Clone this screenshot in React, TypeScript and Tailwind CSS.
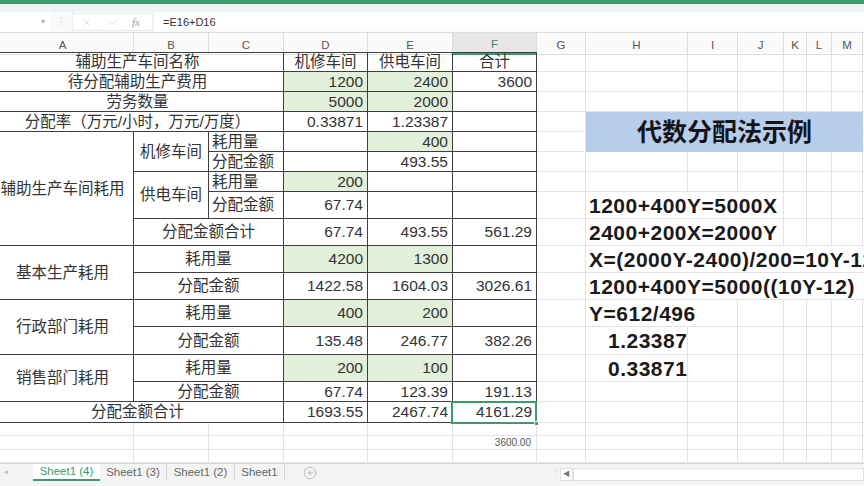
import React from "react";
import { X, Check, CirclePlus } from "lucide-react";

const FONT = "font-['Liberation_Sans','Noto_Sans_CJK_SC',sans-serif]";
const DK = "border-r border-b border-[#3f3f3f] flex items-center text-[15.5px] leading-none text-[#333] whitespace-nowrap";
const LT = "border-r border-b border-[#e3e3e3]";
const GR = "bg-[#e2efda]";
const RT = "border-b border-[#e3e3e3] flex items-center pl-[3px] text-[21px] font-bold tracking-[0.5px] text-[#1a1a1a] whitespace-nowrap leading-none";

function Lights({ n }: { n: number }) {
  return (
    <>
      {Array.from({ length: n }).map((_, i) => (
        <div key={i} className={LT} />
      ))}
    </>
  );
}

function Ctr({ className = "", children }: { className?: string; children?: React.ReactNode }) {
  return <div className={`${DK} justify-center ${className}`}>{children}</div>;
}

function Lft({ className = "", children }: { className?: string; children?: React.ReactNode }) {
  return <div className={`${DK} justify-start pl-[3px] ${className}`}>{children}</div>;
}

function Num({ v, g, className = "" }: { v?: string; g?: boolean; className?: string }) {
  return <div className={`${DK} justify-end pr-[4px] ${g ? GR : ""} ${className}`}>{v}</div>;
}

function FormulaBar() {
  return (
    <div className="h-[20px] flex items-center bg-[#f8f9fa]">
      <div className="w-[50px] h-full bg-white flex items-center justify-end pr-[5px] text-[8px] text-[#aaa]">▾</div>
      <div className="w-[22px] h-full flex items-center justify-center text-[11px] text-[#d0d0d0]">⋮</div>
      <div className="w-[81px] h-[18px] bg-white border border-[#ececec] flex items-center">
        <X size={11} strokeWidth={1.5} className="ml-[8px] text-[#cfcfcf]" />
        <Check size={11} strokeWidth={1.5} className="ml-[16px] text-[#cfcfcf]" />
        <span className="ml-[13px] text-[11px] italic text-[#9a9a9a] font-['Liberation_Serif',serif]">fx</span>
      </div>
      <div className="flex-1 h-[18px] ml-[2px] bg-white flex items-center pl-[8px] text-[11px] text-[#333]">=E16+D16</div>
    </div>
  );
}

const COLS = "grid grid-cols-[142px_75px_75px_84px_85px_84px_49px_102px_50px_46px_23px_25px_31px_40px] ml-[-8px]";

function HeaderRow() {
  const names = ["A", "B", "C", "D", "E", "F", "G", "H", "I", "J", "K", "L", "M", ""];
  return (
    <div className={`${COLS} h-[19px] bg-[#fafafa]`}>
      {names.map((n, i) =>
        n === "F" ? (
          <div key={i} className="border-r border-[#dcdcdc] border-b-2 border-b-[#3a9b6c] bg-[#e6e6e6] flex items-center justify-center text-[11.5px] text-[#3a8a62] pt-[3px]">
            {n}
          </div>
        ) : (
          <div key={i} className="border-r border-b border-[#dcdcdc] flex items-center justify-center text-[11.5px] text-[#555] pt-[3px]">
            {n}
          </div>
        )
      )}
    </div>
  );
}

function Body() {
  return (
    <div className={`${COLS} grid-rows-[20px_20px_20px_20px_20px_20px_20px_27px_27px_27px_27px_27px_28px_27px_20px_21px_13px_14px_13px]`}>
      {/* row 1 */}
      <Ctr className="col-span-3 border-t">辅助生产车间名称</Ctr>
      <Ctr className="border-t">机修车间</Ctr>
      <Ctr className="border-t">供电车间</Ctr>
      <Ctr className="border-t">合计</Ctr>
      <Lights n={8} />
      {/* row 2 */}
      <Ctr className="col-span-3">待分配辅助生产费用</Ctr>
      <Num v="1200" g />
      <Num v="2400" g />
      <Num v="3600" />
      <Lights n={8} />
      {/* row 3 */}
      <Ctr className="col-span-3">劳务数量</Ctr>
      <Num v="5000" g />
      <Num v="2000" g />
      <Num />
      <Lights n={8} />
      {/* row 4 */}
      <Ctr className="col-span-3">分配率（万元/小时，万元/万度）</Ctr>
      <Num v="0.33871" />
      <Num v="1.23387" />
      <Num />
      <div className={LT} />
      <div className="col-span-6 row-span-2 bg-[#b6cdec] flex items-center justify-center text-[25px] font-bold text-[#141414] leading-none">
        代数分配法示例
      </div>
      <div className={LT} />
      {/* row 5 */}
      <Ctr className="row-span-5">辅助生产车间耗用</Ctr>
      <Ctr className="row-span-2">机修车间</Ctr>
      <Lft>耗用量</Lft>
      <Num />
      <Num v="400" g />
      <Num />
      <div className={LT} />
      <div className={LT} />
      {/* row 6 */}
      <Lft>分配金额</Lft>
      <Num />
      <Num v="493.55" />
      <Num />
      <Lights n={8} />
      {/* row 7 */}
      <Ctr className="row-span-2">供电车间</Ctr>
      <Lft>耗用量</Lft>
      <Num v="200" g />
      <Num />
      <Num />
      <Lights n={8} />
      {/* row 8 */}
      <Lft>分配金额</Lft>
      <Num v="67.74" />
      <Num />
      <Num />
      <div className={LT} />
      <div className={`${RT} col-span-3 border-r`}>1200+400Y=5000X</div>
      <Lights n={4} />
      {/* row 9 */}
      <Ctr className="col-span-2">分配金额合计</Ctr>
      <Num v="67.74" />
      <Num v="493.55" />
      <Num v="561.29" />
      <div className={LT} />
      <div className={`${RT} col-span-3 border-r`}>2400+200X=2000Y</div>
      <Lights n={4} />
      {/* row 10 */}
      <Ctr className="row-span-2">基本生产耗用</Ctr>
      <Ctr className="col-span-2">耗用量</Ctr>
      <Num v="4200" g />
      <Num v="1300" g />
      <Num />
      <div className={LT} />
      <div className={`${RT} col-span-7`}>X=(2000Y-2400)/200=10Y-12</div>
      {/* row 11 */}
      <Ctr className="col-span-2">分配金额</Ctr>
      <Num v="1422.58" />
      <Num v="1604.03" />
      <Num v="3026.61" />
      <div className={LT} />
      <div className={`${RT} col-span-7`}>1200+400Y=5000((10Y-12)</div>
      {/* row 12 */}
      <Ctr className="row-span-2">行政部门耗用</Ctr>
      <Ctr className="col-span-2">耗用量</Ctr>
      <Num v="400" g />
      <Num v="200" g />
      <Num />
      <div className={LT} />
      <div className={`${RT} col-span-2 border-r`}>Y=612/496</div>
      <Lights n={5} />
      {/* row 13 */}
      <Ctr className="col-span-2">分配金额</Ctr>
      <Num v="135.48" />
      <Num v="246.77" />
      <Num v="382.26" />
      <div className={LT} />
      <div className={`${RT} border-r pl-[22px]`}>1.23387</div>
      <Lights n={6} />
      {/* row 14 */}
      <Ctr className="row-span-2">销售部门耗用</Ctr>
      <Ctr className="col-span-2">耗用量</Ctr>
      <Num v="200" g />
      <Num v="100" g />
      <Num />
      <div className={LT} />
      <div className={`${RT} border-r pl-[22px]`}>0.33871</div>
      <Lights n={6} />
      {/* row 15 */}
      <Ctr className="col-span-2">分配金额</Ctr>
      <Num v="67.74" />
      <Num v="123.39" />
      <Num v="191.13" />
      <Lights n={8} />
      {/* row 16 */}
      <Ctr className="col-span-3">分配金额合计</Ctr>
      <Num v="1693.55" />
      <Num v="2467.74" />
      <Num v="4161.29" />
      <Lights n={8} />
      {/* row 17 */}
      <Lights n={14} />
      {/* row 18 */}
      <Lights n={5} />
      <div className={`${LT} flex items-center justify-end pr-[5px] text-[10px] leading-none text-[#555]`}>3600.00</div>
      <Lights n={8} />
      {/* row 19 */}
      <Lights n={14} />
    </div>
  );
}

function Selection() {
  return (
    <div className="absolute left-[451px] top-[401px] w-[86px] h-[23px] border-2 border-[#3a9b6c] pointer-events-none">
      <div className="absolute right-[-4px] bottom-[-4px] w-[5px] h-[5px] bg-[#3a9b6c] border border-white" />
    </div>
  );
}

function TabBar() {
  return (
    <div className="h-[23px] border-t border-[#d6d6d6] bg-[#f4f4f4] flex items-start text-[11.5px] text-[#666]">
      <div className="w-[33px] h-[17px] flex items-center pl-[4px] text-[7px] text-[#bbb]">◂</div>
      <div className="w-[67px] h-[17px] bg-white border-b-2 border-[#3a9b6c] flex items-center justify-center text-[#3a9b6c]">Sheet1 (4)</div>
      <div className="w-[67px] h-[17px] border-r border-[#d8d8d8] flex items-center justify-center">Sheet1 (3)</div>
      <div className="w-[68px] h-[17px] border-r border-[#d8d8d8] flex items-center justify-center">Sheet1 (2)</div>
      <div className="w-[50px] h-[17px] border-r border-[#d8d8d8] flex items-center justify-center">Sheet1</div>
      <div className="ml-[18px] h-[17px] flex items-center">
        <CirclePlus size={14} strokeWidth={1.2} className="text-[#aaa]" />
      </div>
      <div className="flex-1" />
      <div className="w-[10px] h-[17px] flex items-center justify-center text-[9px] text-[#ccc]">⋮</div>
      <div className="w-[13px] h-[13px] mt-[4px] bg-white border border-[#ddd] flex items-center justify-center text-[7px] text-[#777]">◀</div>
      <div className="w-[291px] h-[13px] mt-[4px] bg-white border border-[#e0e0e0]" />
    </div>
  );
}

export default function App() {
  return (
    <div className={`relative w-[864px] h-[486px] overflow-hidden bg-white flex flex-col ${FONT}`}>
      <div className="h-[4px] bg-[#3a9b6c]" />
      <div className="h-[8px] bg-[#eef3f6]" />
      <FormulaBar />
      <div className="h-[1px] bg-[#dedede]" />
      <HeaderRow />
      <Body />
      <TabBar />
      <Selection />
    </div>
  );
}
